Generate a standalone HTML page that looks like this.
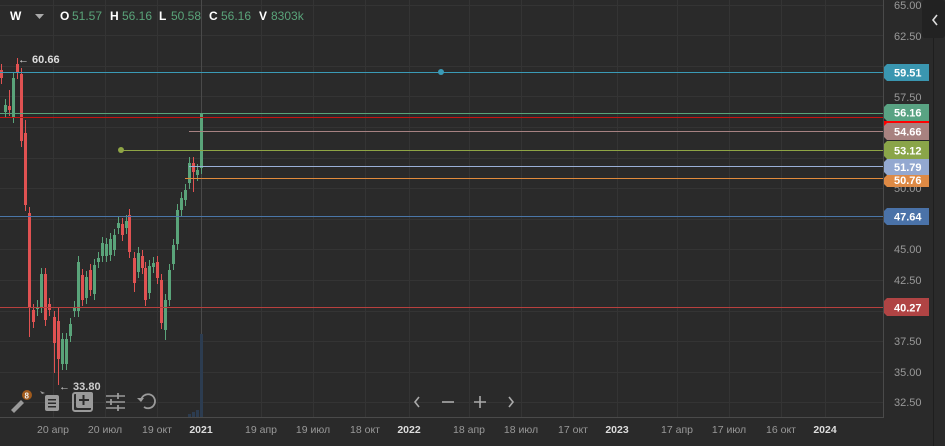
<!DOCTYPE html>
<html><head><meta charset="utf-8"><style>
html,body{margin:0;padding:0;background:#2a2a2a;width:945px;height:446px;overflow:hidden}
svg{display:block;font-family:"Liberation Sans",sans-serif}
</style></head><body>
<svg width="945" height="446" viewBox="0 0 945 446" xmlns="http://www.w3.org/2000/svg">
<rect width="945" height="446" fill="#2a2a2a"/>
<g stroke="#343434" stroke-width="1">
<path d="M0 5.5H883M0 35.5H883M0 66.5H883M0 96.5H883M0 127.5H883M0 158.5H883M0 188.5H883M0 219.5H883M0 249.5H883M0 280.5H883M0 311.5H883M0 341.5H883M0 372.5H883M0 402.5H883"/>
<path d="M53.5 0V417M105.5 0V417M157.5 0V417M261.5 0V417M313.5 0V417M365.5 0V417M409.5 0V417M469.5 0V417M521.5 0V417M573.5 0V417M617.5 0V417M677.5 0V417M729.5 0V417M781.5 0V417M825.5 0V417"/>
</g>
<path d="M201.5 0V417" stroke="#4a4a4a"/>
<path d="M883.5 0V417.5H0" stroke="#4a4a4a" fill="none"/>
<path d="M933.5 38V446" stroke="#1e1e1e"/>
<rect x="922" y="0" width="23" height="38" rx="3" fill="#222"/>
<path d="M937 15l-4 5 4 5" stroke="#ddd" stroke-width="1.6" fill="none"/>
<g fill="#2c3c50"><rect x="200" y="334" width="3" height="83"/><rect x="196" y="410" width="3" height="7"/><rect x="192" y="412" width="3" height="5"/><rect x="188" y="414" width="3" height="3"/></g>
<g stroke="#5aa47a" fill="none">
<path stroke-width="1" d="M5.5 99V118M13.5 72V123M37.5 300V316M41.5 268V313M62.5 333V370M66.5 333V370M70.5 318V342M74.5 301V317M78.5 256V317M86.5 271V304M94.5 259V300M98.5 252V268M102.5 237V262M106.5 238V262M110.5 233V261M114.5 229V256M118.5 217V234M126.5 215V234M138.5 247V278M149.5 260V299M153.5 257V273M165.5 294V340M169.5 264V306M173.5 239V270M177.5 204V250M181.5 192V216M185.5 184V206M189.5 157V189M197.5 164V181M201.5 113V174"/>
<path stroke-width="3" d="M5.5 105V112M13.5 78V117M37.5 307V309M41.5 274V307M62.5 339V364M66.5 339V364M70.5 324V336M74.5 307V311M78.5 262V311M86.5 277V298M94.5 265V294M98.5 258V262M102.5 243V256M106.5 244V256M110.5 239V255M114.5 235V250M118.5 223V228M126.5 221V228M138.5 253V272M149.5 266V293M153.5 263V267M165.5 300V330M169.5 270V300M173.5 245V264M177.5 210V244M181.5 198V210M185.5 190V200M189.5 163V183M197.5 170V175M201.5 113V168"/>
</g>
<g stroke="#e05252" fill="none">
<path stroke-width="1" d="M1.5 64V84M9.5 90V116M17.5 58V79M21.5 68V147M25.5 120V211M29.5 207V337M33.5 304V328M45.5 268V326M49.5 298V316M54.5 311V373M58.5 307V385M82.5 269V306M90.5 264V296M122.5 218V241M129.5 209V258M134.5 252V292M142.5 250V274M145.5 262V306M157.5 256V284M161.5 274V329M193.5 157V192"/>
<path stroke-width="3" d="M1.5 70V78M9.5 106V110M17.5 64V73M21.5 74V141M25.5 133V205M29.5 213V308M33.5 310V322M45.5 274V320M49.5 304V310M54.5 317V343M58.5 321V359M82.5 275V300M90.5 270V290M122.5 224V235M129.5 215V252M134.5 258V283M142.5 256V268M145.5 268V300M157.5 262V278M161.5 280V323M193.5 163V172"/>
</g>
<g stroke-width="1">
<path d="M0 72.5H883" stroke="#3a9ab6"/>
<path d="M0 113.5H883" stroke="#57a57a"/>
<path d="M0 117.5H883" stroke="#c41612"/>
<path d="M189 131.5H883" stroke="#a78282"/>
<path d="M121 150.5H883" stroke="#8fa545"/>
<path d="M189 166.5H883" stroke="#9ab0d8"/>
<path d="M185 178.5H883" stroke="#e08a3c"/>
<path d="M0 216.5H883" stroke="#4a76a8"/>
<path d="M0 307.5H883" stroke="#b8403e"/>
</g>
<circle cx="441" cy="72" r="3" fill="#3a9ab6"/>
<circle cx="121" cy="150" r="3" fill="#8fa545"/>
<g fill="#999" font-size="11">
<text x="894" y="9">65.00</text><text x="894" y="40">62.50</text><text x="894" y="101">57.50</text><text x="894" y="192">50.00</text><text x="894" y="253">45.00</text><text x="894" y="284">42.50</text><text x="894" y="345">37.50</text><text x="894" y="376">35.00</text><text x="894" y="406">32.50</text>
</g>
<g font-size="11" font-weight="bold" fill="#fff">
<path d="M887 64h42v17h-42l-3-3v-11z" fill="#3a96b0"/><text x="894" y="76.5">59.51</text>
<path d="M887 104h42v17h-42l-3-3v-11z" fill="#59a383"/><text x="894" y="116.5">56.16</text>
<rect x="884" y="121" width="45" height="5" fill="#f00"/>
<path d="M887 123h42v17h-42l-3-3v-11z" fill="#a88280"/><text x="894" y="135.5">54.66</text>
<path d="M887 141h42v18h-42l-3-3v-12z" fill="#8aa549"/><text x="894" y="154.5">53.12</text>
<path d="M887 159h42v16h-42l-3-3v-10z" fill="#93a8d0"/><text x="894" y="171">51.79</text>
<path d="M887 175h42v12h-42l-3-3v-6z" fill="#de8a45"/><text x="894" y="184">50.76</text>
<path d="M887 208h42v17h-42l-3-3v-11z" fill="#4a72a8"/><text x="894" y="220.5">47.64</text>
<path d="M887 298h42v18h-42l-3-3v-12z" fill="#b04444"/><text x="894" y="311.5">40.27</text>
</g>
<g font-size="12">
<text x="10" y="20" fill="#fff" font-weight="bold">W</text>
<path d="M35 14h9l-4.5 5z" fill="#aaa"/>
<text x="60" y="20" fill="#fff" font-weight="bold">O</text><text x="72" y="20" fill="#5aa47a">51.57</text>
<text x="110" y="20" fill="#fff" font-weight="bold">H</text><text x="122" y="20" fill="#5aa47a">56.16</text>
<text x="159" y="20" fill="#fff" font-weight="bold">L</text><text x="171" y="20" fill="#5aa47a">50.58</text>
<text x="209" y="20" fill="#fff" font-weight="bold">C</text><text x="221" y="20" fill="#5aa47a">56.16</text>
<text x="259" y="20" fill="#fff" font-weight="bold">V</text><text x="271" y="20" fill="#5aa47a">8303k</text>
<text x="18" y="63" fill="#ddd" font-size="11" font-weight="bold">← 60.66</text>
<text x="59" y="390" fill="#ccc" font-size="11" font-weight="bold">← 33.80</text>
</g>
<g fill="#999" font-size="10.5" text-anchor="middle">
<text x="53" y="433">20 апр</text><text x="105" y="433">20 июл</text><text x="157" y="433">19 окт</text><text x="201" y="433" fill="#ddd" font-weight="bold">2021</text><text x="261" y="433">19 апр</text><text x="313" y="433">19 июл</text><text x="365" y="433">18 окт</text><text x="409" y="433" fill="#ddd" font-weight="bold">2022</text><text x="469" y="433">18 апр</text><text x="521" y="433">18 июл</text><text x="573" y="433">17 окт</text><text x="617" y="433" fill="#ddd" font-weight="bold">2023</text><text x="677" y="433">17 апр</text><text x="729" y="433">17 июл</text><text x="781" y="433">16 окт</text><text x="825" y="433" fill="#ddd" font-weight="bold">2024</text>
</g>
<g stroke="#aaa" stroke-width="1.6" fill="none">
<path d="M419 397l-4 5 4 5"/><path d="M442 402h12"/><path d="M474 402h12M480 396v12"/><path d="M509 397l4 5-4 5"/>
</g>
<g fill="#9a9a9a" stroke="none">
<path d="M11 410l10-10 3 3-10 10z"/><circle cx="27" cy="395" r="5" fill="#a05a1c"/><text x="24.5" y="398.5" font-size="8" fill="#eee" font-weight="bold">8</text>
<path d="M40 391l5 2-3 1z"/>
<rect x="45" y="395" width="14" height="16" rx="2"/><g fill="#2a2a2a"><rect x="48" y="399" width="8" height="1.5"/><rect x="48" y="402.5" width="8" height="1.5"/><rect x="48" y="406" width="8" height="1.5"/></g>
<rect x="73" y="393" width="19" height="18" rx="2" fill="none" stroke="#9a9a9a" stroke-width="2"/><rect x="76" y="392" width="17" height="16" rx="2"/><path d="M83.5 395v10M79 400h10" stroke="#2a2a2a" stroke-width="2"/>
<path d="M106 396h19M106 402h19M106 408h19" stroke="#9a9a9a" stroke-width="1.6"/><path d="M118 393v6M111 399v6M118 405v6" stroke="#9a9a9a" stroke-width="1.8"/>
<path d="M141 401a7 7 0 1 1 3 6" stroke="#9a9a9a" stroke-width="1.8" fill="none"/><path d="M137 398l4 4 3-4z"/>
</g>
</svg>
</body></html>
